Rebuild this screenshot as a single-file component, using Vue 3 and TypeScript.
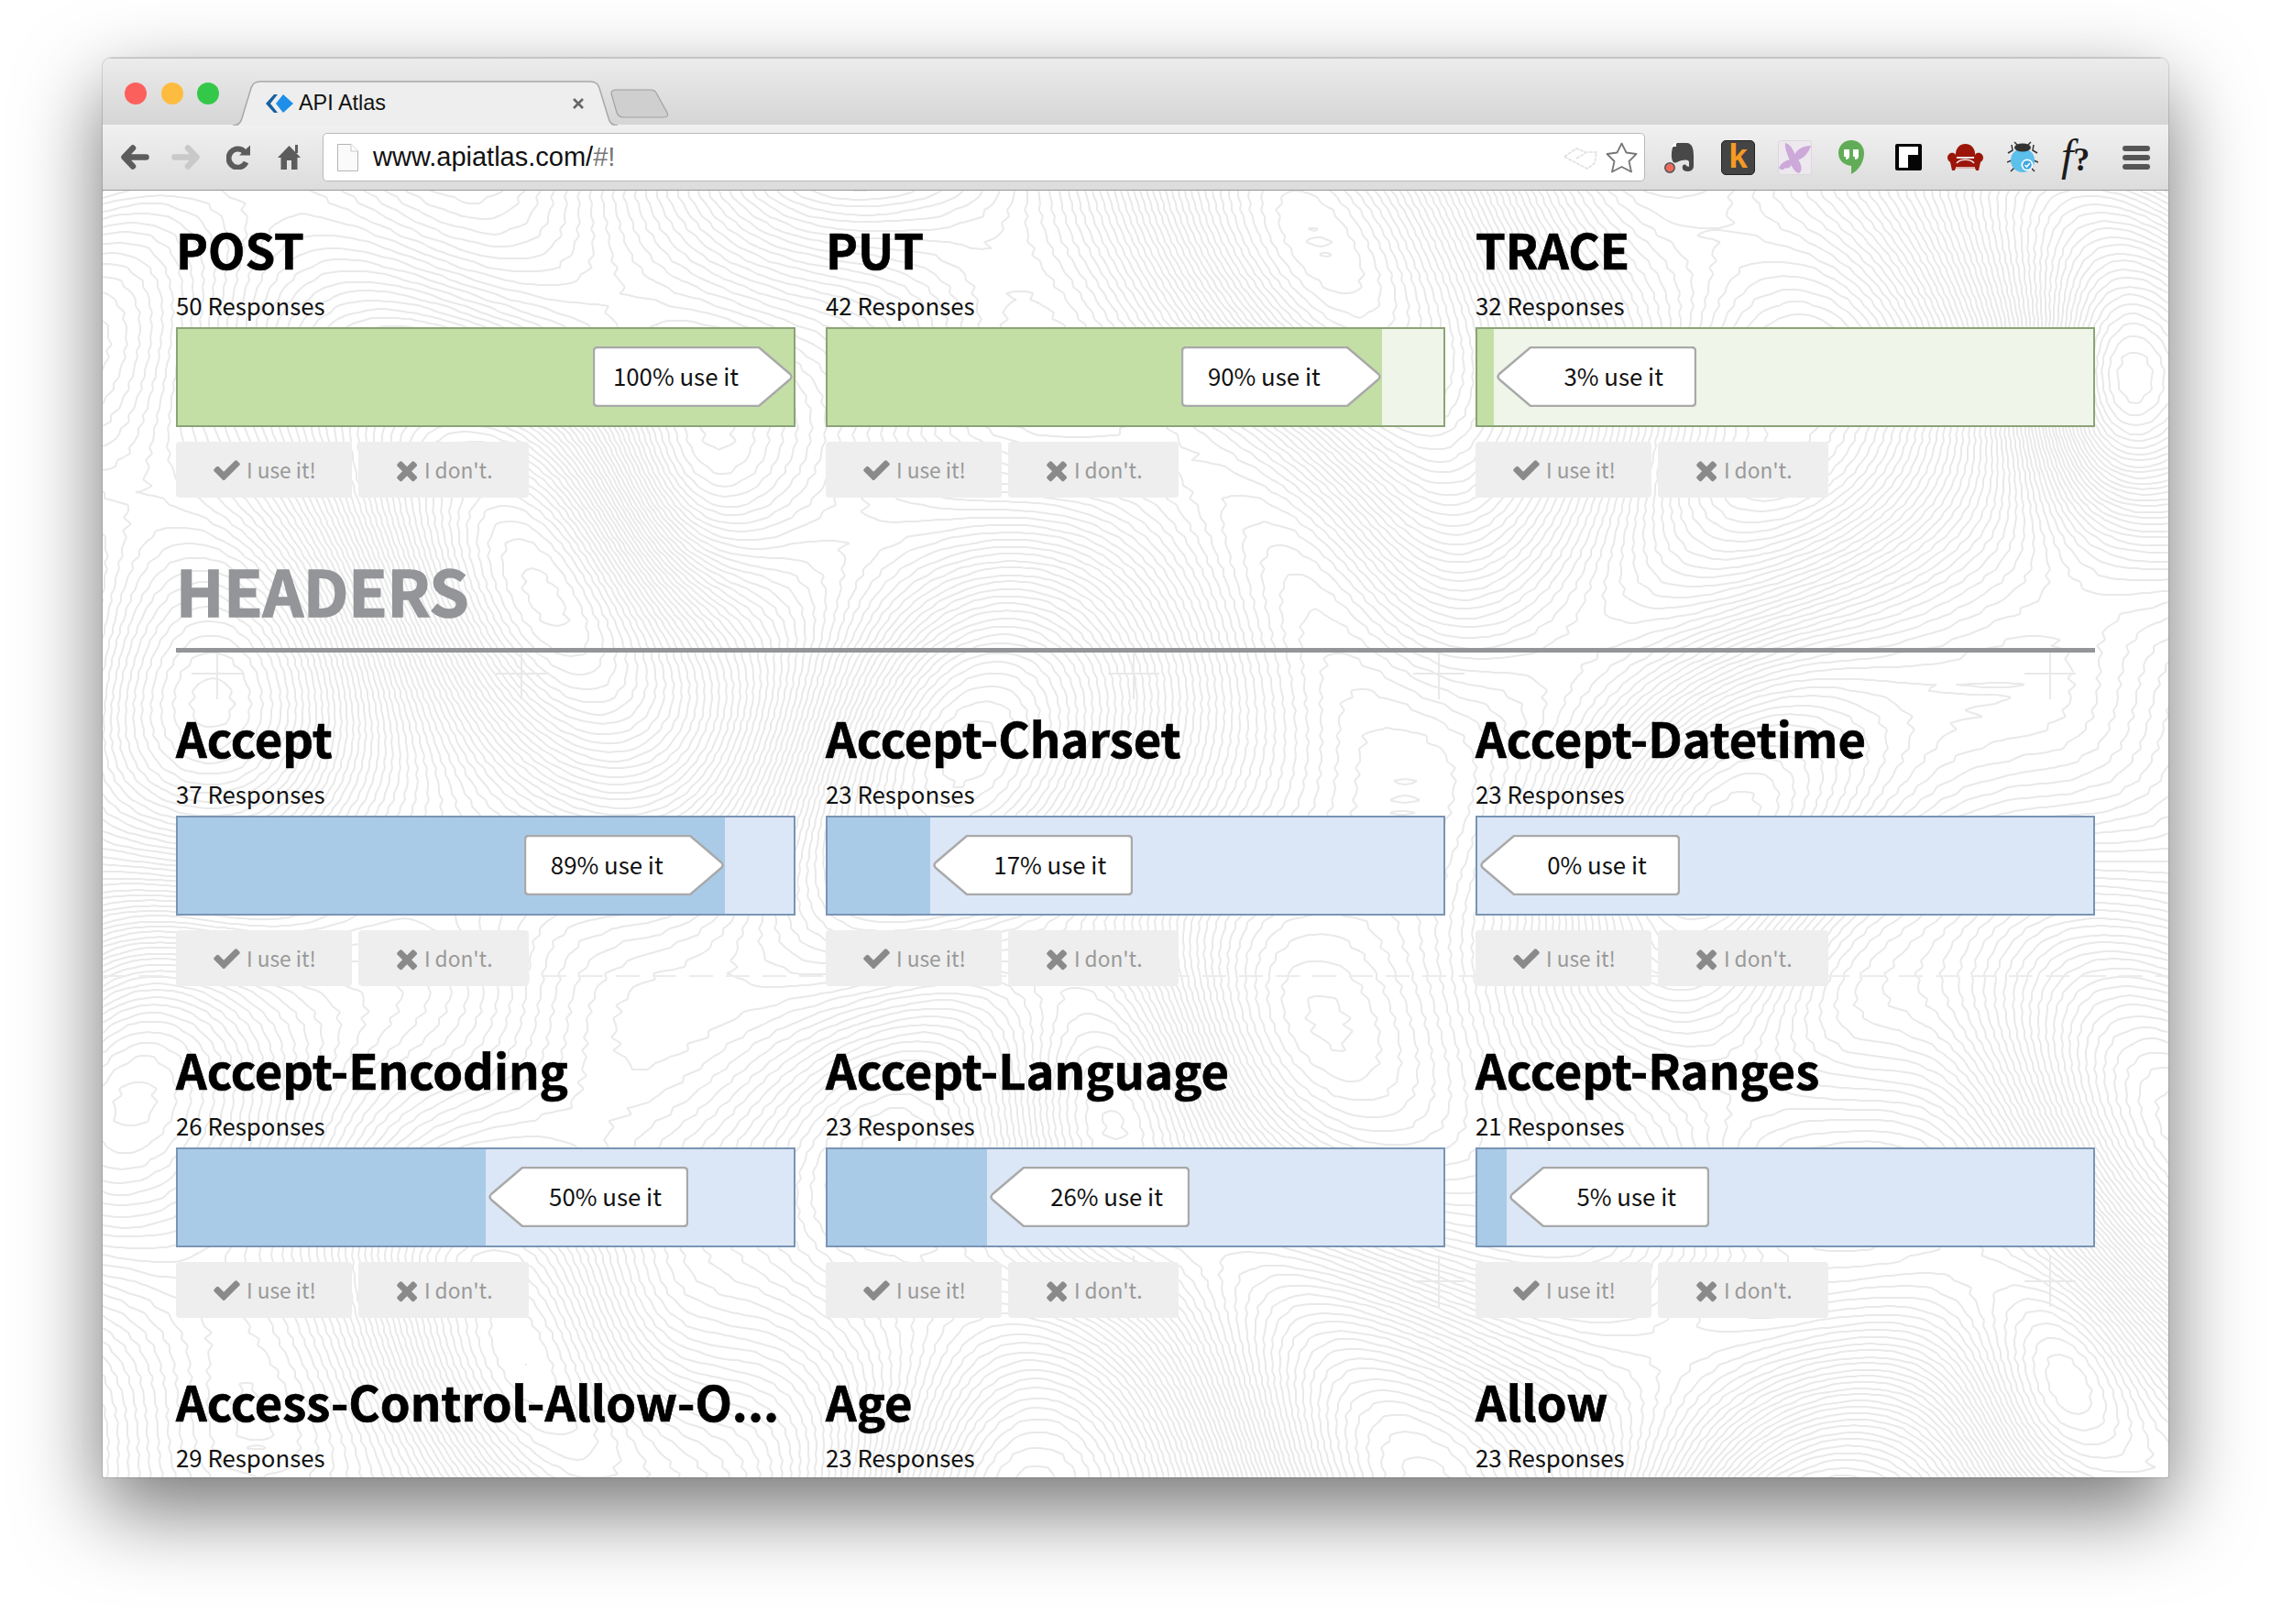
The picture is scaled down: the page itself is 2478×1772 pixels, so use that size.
<template>
  <div class="desk">
    <div class="window">
      <div class="tabstrip">
        <div class="lights">
          <span class="light red"></span>
          <span class="light amber"></span>
          <span class="light green"></span>
        </div>
        <div class="tab">
          <svg class="tab-shape" width="420" height="49" viewBox="0 0 420 49">
            <path d="M0 49 Q8 49 10 41 L20 8 Q22 1 30 1 H390 Q398 1 400 8 L410 41 Q412 49 420 49" fill="#eeeeee" stroke="#a8a8a8" stroke-width="1.5" />
          </svg>
          <svg class="favicon" width="32" height="20" viewBox="0 0 32 20">
            <path d="M9 0 L0 10 L9 20 H13 L5 10 L13 0Z" fill="#17609f" />
            <path d="M19 0 L30 10 L19 20 L11 10Z" fill="#1e8fe8" />
          </svg>
          <span class="tab-title">API Atlas</span>
          <svg class="tab-close" width="14" height="14" viewBox="0 0 14 14">
            <path d="M2 2 L12 12 M12 2 L2 12" stroke="#666" stroke-width="2.6" />
          </svg>
        </div>
        <svg class="newtab" width="64" height="32" viewBox="0 0 64 32">
          <path d="M1 5 Q1 1 6 1 H44 Q49 1 51 6 L62 26 Q64 31 58 31 H14 Q9 31 7 26Z" fill="#cfcfcf" stroke="#a0a0a0" stroke-width="1.2" />
        </svg>
      </div>

      <div class="toolbar">
        <svg class="ic-back" width="31" height="27" viewBox="0 0 31 27">
          <path d="M13 3.5 L3.5 13.5 L13 23.5 M4 13.5 H27.5" fill="none" stroke="#5c5c5c" stroke-width="6.5" stroke-linecap="round" stroke-linejoin="round" />
        </svg>
        <svg class="ic-forward" width="31" height="27" viewBox="0 0 31 27">
          <path d="M18 3.5 L27.5 13.5 L18 23.5 M27 13.5 H3.5" fill="none" stroke="#c9c9c9" stroke-width="6.5" stroke-linecap="round" stroke-linejoin="round" />
        </svg>
        <svg class="ic-reload" width="26" height="27" viewBox="0 0 26 27">
          <path d="M20 8 A10 10 0 1 0 21.5 19" fill="none" stroke="#5c5c5c" stroke-width="6" />
          <path d="M14 11.5 L26 0.5 V11.5Z" fill="#5c5c5c" />
        </svg>
        <svg class="ic-home" width="25" height="27" viewBox="0 0 25 27">
          <path d="M12.5 1 L25 14 H21.5 V27 H15 V17 H10 V27 H3.5 V14 H0Z" fill="#5c5c5c" />
          <rect x="19" y="0" width="3" height="9" fill="#5c5c5c" />
        </svg>

        <div class="urlbar">
          <svg class="ic-page" width="23" height="30" viewBox="0 0 23 30">
            <path d="M0.5 0.5 H15 L22.5 8 V29.5 H0.5Z" fill="#fafafa" stroke="#b4b4b4" />
            <path d="M15 0.5 V8 H22.5" fill="#fff" stroke="#c8c8c8" />
          </svg>
          <span class="url">www.apiatlas.com/<span class="url-rest">#!</span></span>
          <svg class="ic-ghost" width="38" height="28" viewBox="0 0 38 28">
            <path d="M1 13 L14 4 L24 8 L36 8 L34 20 L26 26 L18 22 L1 13 M14 15 L24 9" fill="none" stroke="#dfdfdf" stroke-width="1.6" stroke-dasharray="4 1" />
          </svg>
          <svg class="ic-star" width="35" height="34" viewBox="0 0 35 34">
            <path d="M17.5 1.5 L22.5 11.5 L33.5 13 L25.5 21 L28 32.5 L17.5 27 L7 32.5 L9.5 21 L1.5 13 L12.5 11.5Z" fill="#fff" stroke="#777" stroke-width="1.8" stroke-linejoin="round" />
          </svg>
        </div>

        <svg class="ext-evernote" width="34" height="34" viewBox="0 0 34 34">
          <path d="M10 6 L15 1 H26 C32 2 33 8 33 16 V26 C33 31 29 32 26 32 C22 32 20 29 21 26 C22 24 25 24 25 26 L28 27 V22 C28 19 24 19 20 20 C17 20 14 24 11 22 C9 20 8 14 10 6Z" fill="#484848" />
          <path d="M8 5 L14 0 V5Z" fill="#fff" />
          <circle cx="7" cy="28" r="5.2" fill="#ee6a5c" stroke="#555" stroke-width="1.6" />
        </svg>
        <span class="ext-k">k</span>
        <svg class="ext-butterfly" width="37" height="38" viewBox="0 0 37 38">
          <rect x="0.5" y="0.5" width="36" height="37" rx="2" fill="#ece8ee" stroke="#dcd8de" />
          <path d="M8 3 C16 5 17 14 22 21 C26 27 27 33 23 36 C17 35 14 26 12 20 C10 14 7 8 8 3Z" fill="#cda9da" />
          <path d="M18 17 C20 10 27 6 36 6 C34 13 28 20 21 22Z" fill="#cda9da" />
          <path d="M1 30 C4 24 10 21 16 21 C16 28 12 32 8 30 C6 33 3 33 1 30Z" fill="#cda9da" />
        </svg>
        <svg class="ext-hangouts" width="28" height="37" viewBox="0 0 28 37">
          <path d="M14 0 C6 0 0 6 0 14 C0 22 6 27 14 28 V37 C22 33 28 24 28 14 C28 6 22 0 14 0Z" fill="#61ad57" />
          <path d="M6 10 H12 V17 C12 20 10 21 8 21 V18 H6Z M16 10 H22 V17 C22 20 20 21 18 21 V18 H16Z" fill="#fff" />
        </svg>
        <svg class="ext-flip" width="29" height="29" viewBox="0 0 29 29">
          <rect width="29" height="29" rx="2" fill="#050505" />
          <path d="M4 3 H25 V12 H14 V26 H4Z" fill="#fff" />
        </svg>
        <svg class="ext-chair" width="39" height="29" viewBox="0 0 39 29">
          <path d="M9 14 C8 4 14 0 19.5 0 C25 0 31 4 30 14Z" fill="#9b1508" />
          <path d="M0 15 C0 11 4 9 7 10 C9 11 10 14 10 16 H29 C29 14 30 11 32 10 C35 9 39 11 39 15 C39 18 37 19 36 20 L34 29 H31 L30.5 27 H8.5 L8 29 H5 L3 20 C2 19 0 18 0 15Z" fill="#9b1508" />
          <path d="M10 21 C14 16 25 16 29 21 M9 26 H30" fill="none" stroke="#f0e6e4" stroke-width="1.6" />
        </svg>
        <svg class="ext-bug" width="34" height="35" viewBox="0 0 34 35">
          <path d="M8 1 L12 5 M26 1 L22 5 M1 13 L6 10 L5 4 M33 13 L28 10 L29 4 M0 23 L5 21 M34 23 L29 21 M4 33 L8 29 M30 33 L26 29" fill="none" stroke="#333" stroke-width="1.5" />
          <ellipse cx="17" cy="21" rx="13" ry="13" fill="#5cbfec" />
          <ellipse cx="17" cy="7" rx="9" ry="4.5" fill="#333" />
          <circle cx="22" cy="26" r="6.5" fill="#fff" />
          <circle cx="22" cy="26" r="4.8" fill="#3da6e2" />
          <path d="M19.5 26 L21.5 28 L24.8 24" fill="none" stroke="#fff" stroke-width="1.6" />
        </svg>
        <span class="ext-f"><i class="ext-f-letter">f</i>?</span>
        <div class="menu-icon">
          <span></span>
          <span></span>
          <span></span>
        </div>
      </div>

      <div class="viewport">
        <svg class="topo" width="2254" height="1404" viewBox="0 0 2254 1404">
          <path :d="contours" fill="none" stroke="#e9e9e9" stroke-width="2" />
          <path :d="crosses" fill="none" stroke="#e9e9e9" stroke-width="2" />
          <path d="M0 857 H2254" fill="none" stroke="#ececec" stroke-width="2" stroke-dasharray="26 14" />
        </svg>

        <div class="page">
          <div class="grid">
            <ApiCard v-for="c in methods" :key="c.name" :card="c" tone="green" />
          </div>

          <h2 class="section">HEADERS</h2>

          <div class="grid">
            <ApiCard v-for="c in headers" :key="c.name" :card="c" tone="blue" />
          </div>
        </div>
      </div>
    </div>
  </div>
</template>

<script setup lang="ts">
import { defineComponent, h } from 'vue';

interface Card {
  name: string;
  responses: number;
  label: number;
  pct: number;
}

const methods: Card[] = [
  { name: 'POST', responses: 50, label: 100, pct: 100 },
  { name: 'PUT', responses: 42, label: 90, pct: 90 },
  { name: 'TRACE', responses: 32, label: 3, pct: 2.7 },
];

const headers: Card[] = [
  { name: 'Accept', responses: 37, label: 89, pct: 88.8 },
  { name: 'Accept-Charset', responses: 23, label: 17, pct: 16.7 },
  { name: 'Accept-Datetime', responses: 23, label: 0, pct: 0 },
  { name: 'Accept-Encoding', responses: 26, label: 50, pct: 50 },
  { name: 'Accept-Language', responses: 23, label: 26, pct: 25.9 },
  { name: 'Accept-Ranges', responses: 21, label: 5, pct: 4.8 },
  { name: 'Access-Control-Allow-O...', responses: 29, label: 50, pct: 50 },
  { name: 'Age', responses: 23, label: 50, pct: 50 },
  { name: 'Allow', responses: 23, label: 50, pct: 50 },
];

const CHECK =
  'M1671 566q0 40-28 68l-724 724-136 136q-28 28-68 28t-68-28l-136-136-362-362q-28-28-28-68t28-68l136-136q28-28 68-28t68 28l294 295 656-657q28-28 68-28t68 28l136 136q28 28 28 68z';
const TIMES =
  'M1490 1322q0 40-28 68l-136 136q-28 28-68 28t-68-28l-294-294-294 294q-28 28-68 28t-68-28l-136-136q-28-28-28-68t28-68l294-294-294-294q-28-28-28-68t28-68l136-136q28-28 68-28t68 28l294 294 294-294q28-28 68-28t68 28l136 136q28 28 28 68t-28 68l-294 294 294 294q28 28 28 68z';
const PILL_RIGHT = 'M5 1 H181 L215 30 Q218 33 215 36 L181 65 H5 Q1 65 1 61 V5 Q1 1 5 1Z';
const PILL_LEFT = 'M213 1 H37 L3 30 Q0 33 3 36 L37 65 H213 Q217 65 217 61 V5 Q217 1 213 1Z';

const icon = (d: string, size: number, box: string) =>
  h('svg', { width: size, height: size, viewBox: box }, [h('path', { d, fill: '#8a8a8a' })]);

// one endpoint or header: name, count, usage bar and the two vote buttons
const ApiCard = defineComponent({
  props: {
    card: { type: Object as () => Card, required: true },
    tone: { type: String, required: true },
  },
  setup(props) {
    return () => {
      const c = props.card;
      const right = c.pct > 50;
      const pillPos = right ? { right: `calc(${100 - c.pct}% + 1px)` } : { left: `calc(${c.pct}% + 3px)` };
      return h('div', { class: 'card' }, [
        h('h3', { class: 'card-title' }, c.name),
        h('div', { class: 'card-count' }, `${c.responses} Responses`),
        h('div', { class: ['bar', props.tone] }, [
          h('div', { class: 'bar-fill', style: { width: `${c.pct}%` } }),
          h('div', { class: ['pill', right ? 'pill-right' : 'pill-left'], style: pillPos }, [
            h('svg', { class: 'pill-shape', width: 218, height: 66, viewBox: '0 0 218 66' }, [
              h('path', { d: right ? PILL_RIGHT : PILL_LEFT, fill: '#fff', stroke: '#a9a9a9', 'stroke-width': 2.4 }),
            ]),
            h('span', { class: 'pill-text' }, `${c.label}% use it`),
          ]),
        ]),
        h('div', { class: 'votes' }, [
          h('div', { class: 'vote' }, [icon(CHECK, 33, '0 0 1792 1792'), 'I use it!']),
          h('div', { class: 'vote' }, [icon(TIMES, 28, '130 130 1520 1520'), "I don't."]),
        ]),
      ]);
    };
  },
});

// topographic backdrop: iso lines of a smooth height field, traced with marching squares
const hills = [
  [640, 322, 6, 75],
  [2190, 242, 6, 60],
  [1900, 900, -6, 90],
  [2130, 1320, 6, 70],
  [600, 1240, -6, 85],
  [1100, 1000, 6, 80],
  [1450, 450, 5, 90],
  [160, 700, 5, 100],
];

const height = (x: number, y: number): number => {
  let v =
    5 * Math.sin(x / 170 + y / 260) +
    4 * Math.cos(x / 120 - y / 210 + 1.3) +
    3 * Math.sin(y / 95 + 0.7 + Math.sin(x / 140) * 1.4);
  for (const [hx, hy, a, s] of hills) {
    const dx = (x - hx) / 1.0;
    const dy = (y - hy) / 1.5;
    v += a * Math.exp(-(dx * dx + dy * dy) / (2 * s * s));
  }
  // wobble so the lines are not too clean
  return v * 2.3 + 0.12 * Math.sin(x * 0.9 + y * 0.53);
};

const traceContours = (w: number, ht: number, step: number): string => {
  const cols = Math.ceil(w / step) + 1;
  const rows = Math.ceil(ht / step) + 1;
  const vals: number[] = [];
  for (let j = 0; j < rows; j++) {
    for (let i = 0; i < cols; i++) vals.push(height(i * step, j * step));
  }
  const parts: string[] = [];
  for (let j = 0; j < rows - 1; j++) {
    for (let i = 0; i < cols - 1; i++) {
      const a = vals[j * cols + i];
      const b = vals[j * cols + i + 1];
      const c = vals[(j + 1) * cols + i + 1];
      const d = vals[(j + 1) * cols + i];
      const lo = Math.ceil(Math.min(a, b, c, d));
      const hi = Math.floor(Math.max(a, b, c, d));
      for (let l = lo; l <= hi; l++) {
        const pts: string[] = [];
        const x = i * step;
        const y = j * step;
        const fmt = (px: number, py: number) => `${Math.round(px)} ${Math.round(py)}`;
        if (a < l !== b < l) pts.push(fmt(x + (step * (l - a)) / (b - a), y));
        if (b < l !== c < l) pts.push(fmt(x + step, y + (step * (l - b)) / (c - b)));
        if (c < l !== d < l) pts.push(fmt(x + step - (step * (l - c)) / (d - c), y + step));
        if (d < l !== a < l) pts.push(fmt(x, y + step - (step * (l - d)) / (a - d)));
        if (pts.length >= 2) parts.push(`M${pts[0]}L${pts[1]}`);
        if (pts.length === 4) parts.push(`M${pts[2]}L${pts[3]}`);
      }
    }
  }
  return parts.join('');
};

const contours = traceContours(2254, 1404, 7);

const crosses = [
  [125, 527], [457, 527], [1125, 527], [1458, 527], [2125, 527],
  [1458, 1190], [2125, 1190], [1125, 1190],
]
  .map(([x, y]) => `M${x - 28} ${y}H${x + 28}M${x} ${y - 28}V${y + 28}`)
  .join('');
</script>

<style scoped>
.desk {
  width: 2478px;
  height: 1772px;
  box-sizing: border-box;
  padding: 63px 112px 160px;
  background: #fff;
  overflow: hidden;
}

.window {
  height: 1549px;
  display: flex;
  flex-direction: column;
  border-radius: 10px 10px 2px 2px;
  box-shadow: 0 35px 90px rgba(0, 0, 0, 0.55), 0 0 0 1px rgba(0, 0, 0, 0.12);
  overflow: hidden;
  background: #fff;
}

.tabstrip {
  flex: none;
  height: 73px;
  display: flex;
  align-items: flex-end;
  box-sizing: border-box;
  padding-left: 24px;
  background: linear-gradient(#ececec, #d5d5d5);
  border-top: 1px solid #c4c4c4;
}

.lights {
  align-self: flex-start;
  margin-top: 26px;
  display: flex;
  gap: 15.5px;
}

.light {
  width: 24px;
  height: 24px;
  border-radius: 50%;
}

.red { background: #fc605c; }
.amber { background: #fdbc40; }
.green { background: #34c84a; }

.tab {
  position: relative;
  width: 420px;
  height: 49px;
  margin-left: 15px;
  box-sizing: border-box;
  padding: 0 36px 0 36px;
  display: flex;
  align-items: center;
  margin-bottom: -1px;
  font-family: 'Liberation Sans', sans-serif;
}

.tab-shape {
  position: absolute;
  left: 0;
  top: 0;
}

.favicon,
.tab-title,
.tab-close {
  position: relative;
}

.tab-title {
  margin-left: 4px;
  font-size: 23.4px;
  color: #111;
}

.tab-close {
  margin-left: auto;
}

.newtab {
  align-self: flex-start;
  margin: 33px 0 0 -8px;
}

.toolbar {
  flex: none;
  height: 72px;
  box-sizing: border-box;
  padding-left: 20px;
  display: flex;
  align-items: center;
  background: linear-gradient(#f1f1f1, #dcdcdc);
  border-bottom: 1px solid #999;
}

.ic-forward { margin-left: 24px; }
.ic-reload { margin-left: 29px; }
.ic-home { margin-left: 30px; }

.urlbar {
  width: 1443px;
  height: 53px;
  margin-left: 24px;
  box-sizing: border-box;
  padding: 0 7px 0 15px;
  display: flex;
  align-items: center;
  background: #fff;
  border: 1px solid #b9b9b9;
  border-radius: 5px;
  font-family: 'Liberation Sans', sans-serif;
}

.url {
  margin-left: 16px;
  font-size: 29px;
  color: #111;
}

.url-rest {
  color: #777;
}

.ic-ghost { margin-left: auto; }
.ic-star { margin-left: 8px; }

.ext-evernote { margin-left: 20px; }

.ext-k {
  width: 37px;
  height: 38px;
  margin-left: 29px;
  border-radius: 5px;
  background: #444;
  border: 1px solid #222;
  box-sizing: border-box;
  color: #f59a23;
  font: 700 37px/34px 'Liberation Sans', sans-serif;
  text-align: center;
}

.ext-butterfly { margin-left: 25px; }
.ext-hangouts { margin-left: 29px; }
.ext-flip { margin-left: 34px; }
.ext-chair { margin-left: 28px; }
.ext-bug { margin-left: 26px; }

.ext-f {
  width: 39px;
  margin-left: 25px;
  color: #1c1c1c;
  font: 700 36px/44px 'Liberation Serif', serif;
  white-space: nowrap;
}

.ext-f-letter {
  font-size: 48px;
  font-weight: 400;
  font-style: italic;
}

.menu-icon {
  width: 30px;
  margin-left: 28px;
  display: flex;
  flex-direction: column;
  gap: 4px;
}

.menu-icon span {
  height: 6px;
  border-radius: 3px;
  background: #555;
}

.viewport {
  position: relative;
  flex: 1;
  overflow: hidden;
}

.topo {
  position: absolute;
  left: 0;
  top: 0;
}

.page {
  position: relative;
  padding: 25px 80px 0;
  font-family: 'Noto Sans CJK SC', 'Noto Sans', sans-serif;
}

.grid {
  display: grid;
  grid-template-columns: repeat(3, 676px);
  column-gap: 33px;
  row-gap: 52px;
}

.section {
  margin: 52px 0 54px;
  height: 117px;
  box-sizing: border-box;
  border-bottom: 5px solid #939598;
  color: #939598;
  font-size: 69px;
  font-weight: 700;
  line-height: 97px;
  -webkit-text-stroke: 1.6px #939598;
}

.card {
  min-width: 0;
}

.card :deep(.card-title) {
  margin: 3px 0 9px;
  height: 70px;
  font-size: 52.5px;
  font-weight: 700;
  line-height: 70px;
  color: #000;
  white-space: nowrap;
  -webkit-text-stroke: 0.7px #000;
}

.card :deep(.card-count) {
  height: 36px;
  margin-bottom: 6px;
  font-size: 25.8px;
  line-height: 36px;
  color: #111;
}

.card :deep(.bar) {
  position: relative;
  height: 109px;
  box-sizing: border-box;
  border: 2px solid;
}

.card :deep(.bar.green) {
  background: #eff5e9;
  border-color: #8ca377;
}

.card :deep(.bar.blue) {
  background: #dbe7f6;
  border-color: #7a94b4;
}

.card :deep(.bar-fill) {
  height: 100%;
}

.card :deep(.green .bar-fill) {
  background: #c3dfa6;
}

.card :deep(.blue .bar-fill) {
  background: #a9cbe8;
}

.card :deep(.pill) {
  position: absolute;
  top: 19px;
  width: 218px;
  height: 66px;
  box-sizing: border-box;
  display: flex;
  align-items: center;
  justify-content: center;
}

.card :deep(.pill-right) {
  padding-right: 37px;
}

.card :deep(.pill-left) {
  padding-left: 37px;
}

.card :deep(.pill-shape) {
  position: absolute;
  left: 0;
  top: 0;
}

.card :deep(.pill-text) {
  position: relative;
  top: -2px;
  font-size: 25.8px;
  color: #111;
}

.card :deep(.votes) {
  margin-top: 16px;
  display: flex;
  gap: 7px;
}

.card :deep(.vote) {
  height: 61px;
  box-sizing: border-box;
  padding: 0 39px;
  display: flex;
  align-items: center;
  gap: 5px;
  border-radius: 4px;
  background: #eeeeee;
  color: #999;
  font-size: 22.7px;
}
</style>

<style>
html,
body {
  margin: 0;
  background: #fff;
}
</style>
